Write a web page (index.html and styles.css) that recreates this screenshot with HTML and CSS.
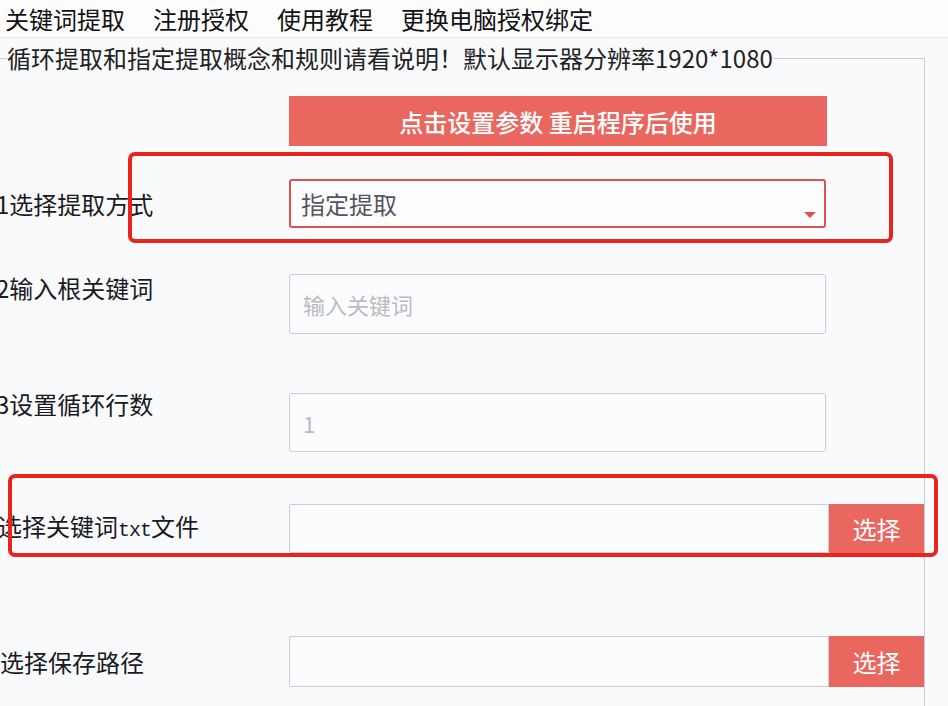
FILE: index.html
```html
<!DOCTYPE html>
<html lang="zh-CN">
<head>
<meta charset="utf-8">
<title>关键词提取</title>
<link rel="stylesheet" href="styles.css">
</head>
<body>
<nav class="menubar">
  <span class="menu-item">关键词提取</span>
  <span class="menu-item">注册授权</span>
  <span class="menu-item">使用教程</span>
  <span class="menu-item">更换电脑授权绑定</span>
</nav>
<fieldset class="group">
  <legend class="group-title">循环提取和指定提取概念和规则请看说明！默认显示器分辨率1920*1080</legend>
  <div class="form">
    <div class="row row-banner">
      <div class="label-col"></div>
      <div class="banner">点击设置参数 重启程序后使用</div>
    </div>
    <div class="row row-mode">
      <div class="label">1选择提取方式</div>
      <div class="select">
        <span class="select-text">指定提取</span>
        <span class="select-arrow"></span>
      </div>
      <div class="mark mark-mode"></div>
    </div>
    <div class="row row-kw">
      <div class="label label-top">2输入根关键词</div>
      <div class="input input-tall placeholder">输入关键词</div>
    </div>
    <div class="row row-loop">
      <div class="label label-top">3设置循环行数</div>
      <div class="input input-tall placeholder">1</div>
    </div>
    <div class="row row-file">
      <div class="label label-file">选择关键词<span class="mono">txt</span>文件</div>
      <div class="picker">
        <div class="input input-file"></div>
        <div class="pick-btn">选择</div>
      </div>
      <div class="mark mark-file"></div>
    </div>
    <div class="row row-save">
      <div class="label label-save">选择保存路径</div>
      <div class="picker picker-save">
        <div class="input input-file"></div>
        <div class="pick-btn">选择</div>
      </div>
    </div>
  </div>
</fieldset>
</body>
</html>
```
FILE: styles.css
```css
html, body {
  margin: 0;
  padding: 0;
}
body {
  background: #f9fafc;
  font-family: "Noto Sans CJK SC", "Noto Sans", sans-serif;
  font-size: 24px;
  color: #1b1b1f;
  overflow: hidden;
  height: 706px;
}
.menubar {
  display: flex;
  align-items: center;
  gap: 28px;
  height: 37px;
  padding-left: 5px;
  background: #fdfdfd;
  border-bottom: 1px solid #e3e4e8;
  line-height: 37px;
  color: #111;
}
.group {
  margin: 5px 23px 0 -16px;
  padding: 0 0 40px 11px;
  border: 1px solid #c9ccd4;
  min-width: 0;
}
.group-title {
  padding: 0;
  margin-left: 11px;
  line-height: 30px;
  color: #222;
}
.form {
  display: flex;
  flex-direction: column;
}
.row {
  display: flex;
  align-items: center;
  position: relative;
}
.label-col, .label {
  width: 293px;
  flex: none;
  line-height: 28px;
  white-space: nowrap;
}
.label-top {
  align-self: flex-start;
}
.row-banner { margin-top: 23px; }
.row-mode { margin-top: 33px; }
.row-kw { margin-top: 46px; }
.row-loop { margin-top: 59px; }
.row-loop .label { margin-top: -3px; }
.row-file { margin-top: 52px; }
.row-save { margin-top: 83px; }
.banner {
  width: 538px;
  height: 50px;
  background: #e9675f;
  color: #fff;
  font-weight: 500;
  display: flex;
  align-items: center;
  justify-content: center;
  box-sizing: border-box;
}
.select {
  box-sizing: border-box;
  width: 537px;
  height: 49px;
  border: 2px solid #d9544f;
  border-radius: 3px;
  background: #fdfdfe;
  display: flex;
  align-items: center;
  padding-left: 10px;
}
.select-text {
  color: #55555f;
}
.select-arrow {
  margin-left: auto;
  align-self: flex-end;
  margin-right: 8px;
  margin-bottom: 8px;
  width: 0;
  height: 0;
  border-left: 6px solid transparent;
  border-right: 6px solid transparent;
  border-top: 6px solid #e0524d;
}
.input {
  box-sizing: border-box;
  border: 1px solid #c9cdd6;
  border-radius: 3px;
  background: #fbfcfd;
  display: flex;
  align-items: center;
  padding-left: 13px;
}
.input-tall {
  width: 537px;
  height: 60px;
}
.row-loop .input-tall { height: 59px; }
.placeholder {
  color: #b9bbc1;
  font-size: 22px;
}
.label-file { margin-left: 2px; width: 291px; }
.label-save { margin-left: 4px; width: 289px; }
.mono {
  font-family: "Liberation Mono", "DejaVu Sans Mono", monospace;
  font-size: 20px;
  letter-spacing: -1px;
}
.picker {
  display: flex;
  height: 49px;
  flex: 1;
}
.picker-save { height: 51px; }
.input-file {
  width: 540px;
  height: 100%;
  border-radius: 2px 0 0 2px;
}
.pick-btn {
  flex: 1;
  background: #e9675f;
  color: #fff;
  display: flex;
  align-items: center;
  justify-content: center;
}
.mark {
  position: absolute;
  box-sizing: border-box;
  border: 4px solid #e8241c;
  border-radius: 7px;
  pointer-events: none;
}
.mark-mode {
  left: 132px;
  top: -27px;
  width: 765px;
  height: 91px;
}
.mark-file {
  left: 12px;
  top: -30px;
  width: 930px;
  height: 83px;
}
```
